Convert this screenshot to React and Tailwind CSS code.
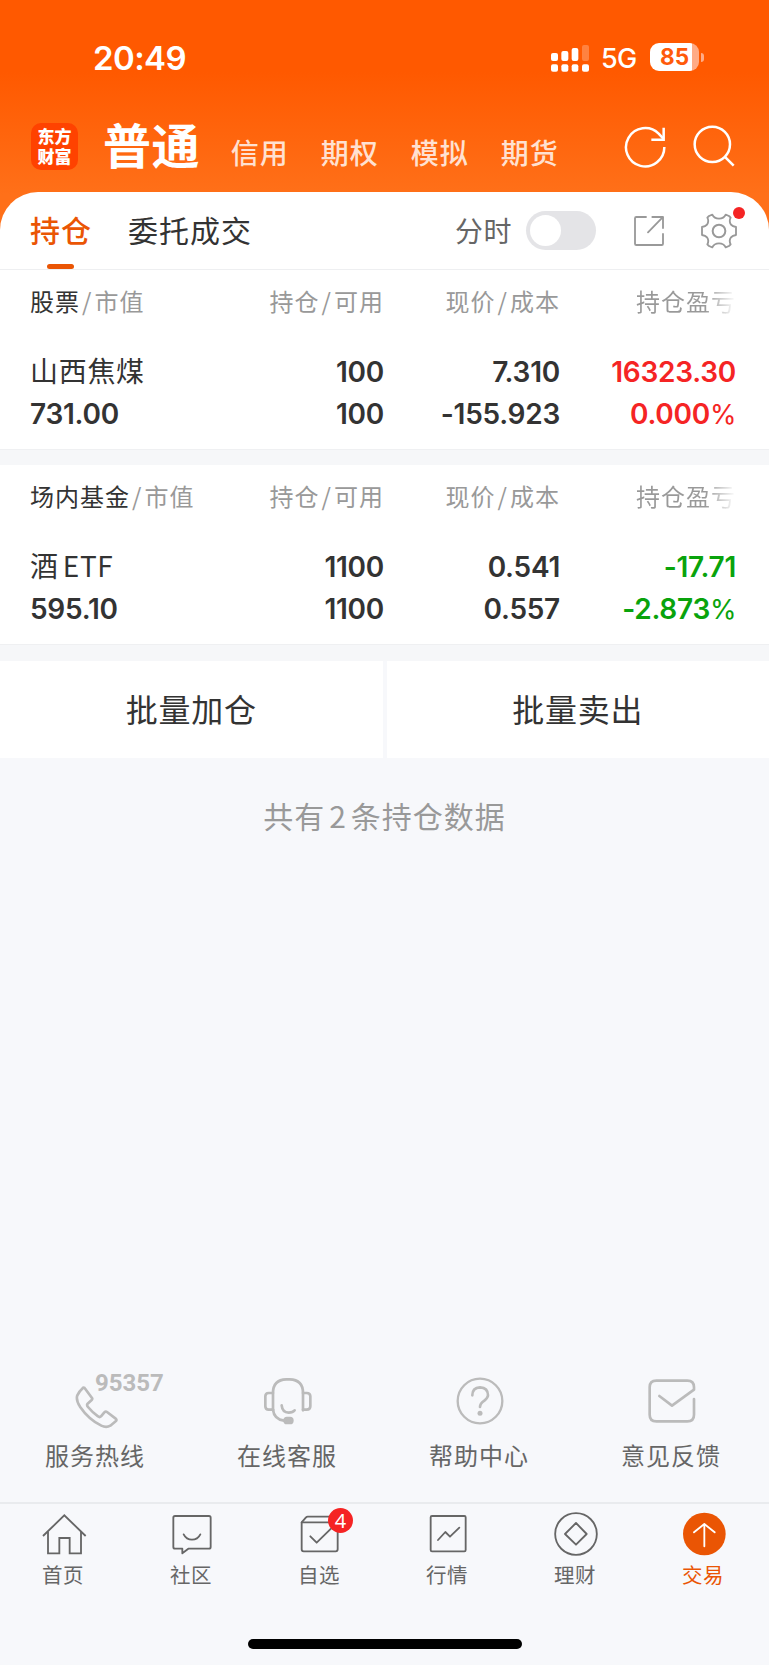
import React from "react";

const CJK = "font-['Noto_Sans_CJK_SC',sans-serif]";
const NUM = "font-['Inter','Noto_Sans_CJK_SC',sans-serif]";

function StatusBar() {
  return (
    <div className="flex h-[114px] items-center pl-[93px] pr-[65px] text-white font-['Inter',sans-serif]">
      <span className="mt-[1px] text-[33px] leading-[34px] font-semibold tracking-[-0.6px]">20:49</span>
      <svg className="ml-auto mt-[1px]" width="38" height="28" viewBox="0 0 114 84" fill="#fff">
        <rect x="0" y="27" width="21" height="24" rx="6" />
        <rect x="31" y="21" width="21" height="30" rx="6" />
        <rect x="62" y="12" width="20" height="39" rx="6" />
        <rect x="93" y="3" width="21" height="48" rx="6" opacity="0.25" />
        <rect x="0" y="61" width="21" height="22" rx="6" />
        <rect x="31" y="61" width="21" height="22" rx="6" />
        <rect x="62" y="61" width="20" height="22" rx="6" />
        <rect x="93" y="61" width="21" height="22" rx="6" />
      </svg>
      <span className="ml-[12px] mt-[3px] w-[35px] text-[27px] leading-[28px] font-medium tracking-[-0.8px]">5G</span>
      <div className="ml-[14px] flex items-center gap-[2px]">
        <div className="flex h-[28px] w-[49px] items-center justify-center rounded-[9px] bg-[linear-gradient(to_right,#fff_42px,#ffab86_42px)] text-[22.5px] leading-[28px] font-bold text-[#ff5a0a]">
          85
        </div>
        <div className="h-[9px] w-[3px] rounded-r-full bg-[#ffab86]" />
      </div>
    </div>
  );
}

function TitleBar() {
  const items = ["信用", "期权", "模拟", "期货"];
  return (
    <div className={`flex h-[78px] items-start pl-[31px] pr-[34px] text-white ${CJK}`}>
      <div className="mt-[9px] h-[47px] w-[47px] rounded-[10px] bg-[#ff4200] pt-[3px] text-center text-[17px] leading-[20px] font-black">
        东方
        <br />
        财富
      </div>
      <span className="ml-[25px] text-[48px] leading-[59px] font-bold tracking-[0.4px]">普通</span>
      <div className="ml-[31px] mt-[24px] flex gap-[31px] text-[28px] leading-[29px] font-medium tracking-[1px] text-[#ffe1d1]">
        {items.map((t) => (
          <span key={t} className="w-[59px]">{t}</span>
        ))}
      </div>
      <svg className="ml-auto mt-[11px]" width="42" height="44" viewBox="720 375 126 132" fill="none" stroke="#fff" strokeWidth="7.5">
        <path d="M841 441A57.5 57.5 0 1 1 824 401L838 416" />
        <path d="M839 383V419H802" />
      </svg>
      <svg className="ml-[26px] mt-[11px]" width="43" height="44" viewBox="924 375 129 132" fill="none" stroke="#fff" strokeWidth="7.5">
        <circle cx="985" cy="433" r="53" />
        <path d="M1022 470L1049 497" />
      </svg>
    </div>
  );
}

function Tabs() {
  return (
    <div className={`flex h-[78px] items-center rounded-t-[38px] border-b border-[#eeeff1] bg-white pl-[30px] pr-[31px] ${CJK}`}>
      <div className="relative text-[30px] font-medium tracking-[1px] text-[#ea5504]">
        <span className="block h-[77px] leading-[75px]">持仓</span>
        <span className="absolute bottom-0 left-[17px] h-[5px] w-[27px] rounded-full bg-[#ea5504]" />
      </div>
      <div className="ml-[36px] h-[77px] text-[30px] leading-[75px] tracking-[1px] text-[#333]">委托成交</div>
      <div className="ml-auto h-[77px] text-[28px] leading-[76px] tracking-[0.5px] text-[#666]">分时</div>
      <div className="ml-[14px] flex h-[39px] w-[70px] items-center rounded-full bg-[#e4e4e7] pl-[4px]">
        <span className="h-[31px] w-[31px] rounded-full bg-white" />
      </div>
      <svg className="ml-[38px]" width="30" height="30" viewBox="749 647 90 90" fill="none" stroke="#999" strokeWidth="5.5" strokeLinecap="round" strokeLinejoin="round">
        <path d="M785 650H756Q752 650 752 654V730Q752 734 756 734H832Q836 734 836 730V701" />
        <path d="M804 650H836V683" />
        <path d="M834 652L791 696" />
      </svg>
      <div className="relative ml-[36px] mt-[1px] h-[38px] w-[38px]">
        <svg width="38" height="38" viewBox="-57 -57 114 114" fill="none" stroke="#999" strokeWidth="5.5" strokeLinejoin="round">
          <path d="M-30 -45L-20 -49C-16 -40 -9 -37 0 -37C9 -37 16 -40 20 -49L30 -45L35 -40C30 -31 31 -26 36 -19C40 -14 44 -13 51 -12V12C44 13 40 14 36 19C31 26 30 31 35 40L30 45L20 49C16 40 9 37 0 37C-9 37 -16 40 -20 49L-30 45L-35 40C-30 31 -31 26 -36 19C-40 14 -44 13 -51 12V-12C-44 -13 -40 -14 -36 -19C-31 -26 -30 -31 -35 -40Z" />
          <circle r="19" strokeWidth="6" />
        </svg>
        <span className="absolute -top-[5px] right-[-7px] h-[12px] w-[12px] rounded-full bg-[#f52424]" />
      </div>
    </div>
  );
}

const GRID = "grid grid-cols-[207px_147px_176px_176px] pl-[30px] pr-[33px]";

function Pair({ a, b }) {
  return (
    <>
      {a}
      <span className="mx-[2px]">/</span>
      {b}
    </>
  );
}

function Figure({ children }) {
  const text = String(children);
  if (!text.endsWith("%")) return text;
  return (
    <>
      {text.slice(0, -1)}
      <span className="text-[27px] font-normal tracking-[-0.5px]">%</span>
    </>
  );
}

function Holding({ kind, name, value, cols, tone }) {
  return (
    <section className="h-[179px] bg-white">
      <div className={`${GRID} h-[60px] text-right text-[24px] leading-[61px] tracking-[1px] text-[#999] ${CJK}`}>
        <div className="text-left">
          <span className="text-[#333]">{kind}</span>
          <Pair b="市值" />
        </div>
        <div><Pair a="持仓" b="可用" /></div>
        <div><Pair a="现价" b="成本" /></div>
        <div className="bg-[linear-gradient(to_right,#999_145px,#fff_176px)] bg-clip-text text-transparent">持仓盈亏</div>
      </div>
      <div className={`${GRID} mt-[21px] auto-rows-[42px] text-right text-[28px] leading-[42px] font-semibold tracking-[-0.25px] text-[#333] ${NUM}`}>
        <div className={`-mt-[2px] text-left font-normal tracking-[0.7px] ${CJK}`}>{name}</div>
        <div>{cols[0][0]}</div>
        <div>{cols[1][0]}</div>
        <div className={tone}>{cols[2][0]}</div>
        <div className="text-left">{value}</div>
        <div>{cols[0][1]}</div>
        <div>{cols[1][1]}</div>
        <div className={tone}><Figure>{cols[2][1]}</Figure></div>
      </div>
    </section>
  );
}

function Service({ label, children }) {
  return (
    <div className="flex flex-1 flex-col items-center">
      <div className="relative h-[56px] w-[56px]">{children}</div>
      <span className="mr-[2px] mt-[10px] text-[24px] leading-[32px] tracking-[1px] text-[#666]">{label}</span>
    </div>
  );
}

function Services() {
  const p = { width: 56, height: 56, fill: "none", stroke: "#bbb", strokeWidth: 8, strokeLinecap: "round", strokeLinejoin: "round" };
  return (
    <div className={`flex h-[129px] w-[768px] ${CJK}`}>
      <Service label="服务热线">
        <svg {...p} viewBox="204 39 168 168">
          <path d="M251 83Q254 83 256 87L276 114Q278 117 275 120L262 132Q260 136 264 141Q277 157 294 169Q299 173 303 169L313 157Q317 153 321 156L347 176Q352 180 347 184L331 197Q319 204 304 197Q266 178 240 140Q227 119 232 106Q237 95 248 85Q249 83 251 83Z" />
        </svg>
        <span className="absolute left-[27px] top-[-2px] text-[24px] leading-[24px] font-bold text-[#bbb] font-['Roboto',sans-serif]">95357</span>
      </Service>
      <Service label="在线客服">
        <svg {...p} viewBox="782 39 168 168">
          <path d="M821 151V99Q821 59 861 58H871Q911 59 911 99V151" />
          <path d="M821 99H808Q798 99 798 109V139Q798 149 808 149H821M911 99H922Q933 99 933 109V139Q933 149 922 149H911" />
          <path d="M821 149Q824 178 854 182" />
          <path d="M847 136Q849 157 868 158Q881 158 886 151" />
          <rect x="856" y="174" width="23" height="15" rx="7" fill="#bbb" />
        </svg>
      </Service>
      <Service label="帮助中心">
        <svg {...p} viewBox="204 39 168 168" strokeWidth="7">
          <circle cx="288" cy="123" r="67" />
          <path d="M265 106Q265 83 288 82Q312 83 312 106Q312 113 301 122Q288 131 288 141" strokeWidth="8" />
          <circle cx="288" cy="160" r="7.5" fill="#bbb" stroke="none" />
        </svg>
      </Service>
      <Service label="意见反馈">
        <svg {...p} viewBox="781 39 168 168">
          <path d="M931 117V164Q931 184 911 184H818Q798 184 798 164V82Q798 62 818 62H911Q931 62 931 82V89L865 137L827 108" />
        </svg>
      </Service>
    </div>
  );
}

function NavItem({ label, active, children }) {
  return (
    <div className={`flex w-[128px] flex-col items-center ${active ? "text-[#ea5504]" : "text-[#666]"}`}>
      <div className="relative h-[46px] w-[46px]">{children}</div>
      <span className="mr-[2px] mt-[3px] text-[20.5px] leading-[28px] tracking-[0.4px]">{label}</span>
    </div>
  );
}

function BottomNav() {
  const p = { width: 46, height: 46, fill: "none", stroke: "#666", strokeWidth: 5.5, strokeLinecap: "round", strokeLinejoin: "round" };
  return (
    <nav className={`flex h-[137px] border-t-2 border-[#e9ebee] pt-[7px] ${CJK}`}>
      <NavItem label="首页">
        <svg {...p} viewBox="123 453 138 138" strokeLinecap="butt" strokeLinejoin="miter">
          <path d="M129 528L193 466L257 528" />
          <path d="M144 515V580H178V534H209V580H243V515" />
        </svg>
      </NavItem>
      <NavItem label="社区">
        <svg {...p} viewBox="508 453 138 138">
          <path d="M526 468H628Q633 468 633 473V561Q633 566 628 566H566L548 580V566H526Q521 566 521 561V473Q521 468 526 468Z" />
          <path d="M552 523Q560 539 577 539Q594 539 602 523" />
        </svg>
      </NavItem>
      <NavItem label="自选">
        <svg {...p} viewBox="892 453 138 138">
          <path d="M906 487V568Q906 574 912 574H1008Q1014 574 1014 568V487Z" />
          <path d="M906 487L919 472Q921 470 924 470H1000L1014 487" />
          <path d="M932 529L951 548L994 506" />
        </svg>
        <span className="absolute left-[31px] top-[-3px] h-[25px] w-[25px] rounded-full bg-[#f52424] text-center text-[20px] leading-[26px] text-white font-['Noto_Sans',sans-serif]">
          4
        </span>
      </NavItem>
      <NavItem label="行情">
        <svg {...p} viewBox="123 453 138 138">
          <rect x="140" y="468" width="105" height="106" rx="4" />
          <path d="M162 540L184 516L198 530L226 503" />
        </svg>
      </NavItem>
      <NavItem label="理财">
        <svg {...p} viewBox="508 453 138 138">
          <circle cx="577" cy="522" r="62.5" />
          <path d="M577 489L609 522L577 554L544 522Z" />
        </svg>
      </NavItem>
      <NavItem label="交易" active>
        <svg {...p} viewBox="892 453 138 138" stroke="#fff">
          <circle cx="962" cy="522" r="64" fill="#ea5504" stroke="none" />
          <path d="M962 559V492M931 517L962 492L993 517" />
        </svg>
      </NavItem>
    </nav>
  );
}

export default function App() {
  return (
    <div className="flex h-[1665px] w-[769px] flex-col overflow-hidden bg-[#f7f8fb]">
      <header className="bg-[linear-gradient(to_bottom,#ff5900_72px,#ff7019_195px)]">
        <StatusBar />
        <TitleBar />
        <Tabs />
      </header>
      <main className="flex flex-1 flex-col">
        <Holding
          kind="股票"
          name="山西焦煤"
          value="731.00"
          cols={[["100", "100"], ["7.310", "-155.923"], ["16323.30", "0.000%"]]}
          tone="text-[#f52424]"
        />
        <div className="h-[16px] border-t border-[#eff0f2] bg-[#f6f7f9]" />
        <Holding
          kind="场内基金"
          name={<>酒<span className="ml-[4px]">ETF</span></>}
          value="595.10"
          cols={[["1100", "1100"], ["0.541", "0.557"], ["-17.71", "-2.873%"]]}
          tone="text-[#09a30c]"
        />
        <div className="h-[17px] border-t border-[#eff0f2] bg-[#f6f7f9]" />
        <div className={`flex h-[97px] gap-[4px] text-center text-[32px] leading-[95px] tracking-[0.8px] text-[#333] ${CJK}`}>
          <div className="flex-1 bg-white">批量加仓</div>
          <div className="flex-1 bg-white">批量卖出</div>
        </div>
        <p className={`mt-[36px] text-center text-[30px] leading-[42px] tracking-[1px] text-[#999] ${CJK}`}>
          共有<span className="mx-[4px]">2</span>条持仓数据
        </p>
        <div className="mt-auto">
          <Services />
        </div>
      </main>
      <BottomNav />
      <div className="flex h-[26px] justify-center">
        <div className="h-[10px] w-[274px] rounded-full bg-black" />
      </div>
    </div>
  );
}
